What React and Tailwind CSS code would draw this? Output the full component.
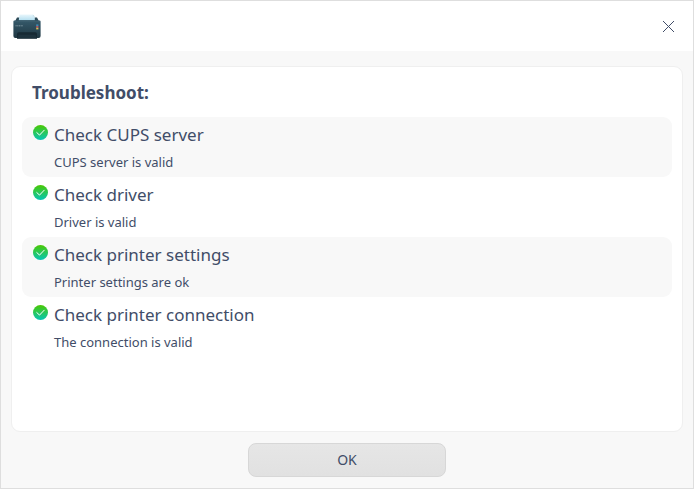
const checks = [
  { title: "Check CUPS server", detail: "CUPS server is valid" },
  { title: "Check driver", detail: "Driver is valid" },
  { title: "Check printer settings", detail: "Printer settings are ok" },
  { title: "Check printer connection", detail: "The connection is valid" },
];

function PrinterIcon() {
  return (
    <svg width="30" height="28" viewBox="0 0 30 28" aria-hidden="true">
      <defs>
        <linearGradient id="body" x1="0" y1="0" x2="0" y2="1">
          <stop offset="0" stopColor="#35596a" />
          <stop offset="0.5" stopColor="#2a4856" />
          <stop offset="1" stopColor="#1f3641" />
        </linearGradient>
        <linearGradient id="paper" x1="0" y1="0" x2="0" y2="1">
          <stop offset="0" stopColor="#eaf7fc" />
          <stop offset="1" stopColor="#b5dff0" />
        </linearGradient>
      </defs>
      <path d="M5 4.5h20l2.4 4.5H2.6z" fill="#2d4a58" />
      <path d="M7.5 1.4h13.3l2 2V7.2h-16z" fill="url(#paper)" />
      <path d="M20.8 1.4v2h2z" fill="#c5dce6" />
      <path d="M2.4 7.6h25.2q1 0 1 1v14.4q0 2-2 2H3.4q-2 0-2-2v-14.4q0-1 1-1z" fill="url(#body)" />
      <path d="M2 8.4h26" stroke="#41616f" strokeWidth="0.6" />
      <path d="M5 21q0-1.8 1.8-1.8h16.4q1.8 0 1.8 1.8v4.8H5z" fill="#172a34" />
      <path d="M6.5 21.8h17l1 3.4h-19z" fill="#1d323d" />
      <path d="M3.5 12.8h7.5" stroke="#8fa5af" strokeWidth="0.8" strokeDasharray="1.2 .5" />
      <path d="M24.2 11.4h2.2v1.6h-2.2z" fill="#3b8cb8" />
      <path d="M24.2 13h2.2v1.7h-2.2z" fill="#b84f60" />
      <path d="M24.2 14.7h2.2v1.7h-2.2z" fill="#d3bd57" />
    </svg>
  );
}

function CheckIcon() {
  return (
    <svg width="16" height="16" viewBox="-0.5 0.5 16 16" className="shrink-0" aria-hidden="true">
      <defs>
        <linearGradient id="valid" x1="0" y1="0" x2="0" y2="1">
          <stop offset="0" stopColor="#4ac800" />
          <stop offset="1" stopColor="#05c6b6" />
        </linearGradient>
      </defs>
      <circle cx="8" cy="8" r="7.5" fill="url(#valid)" />
      <path d="M4 7.8l3 2.8 5-5.2" fill="none" stroke="#fff" strokeWidth="1" />
    </svg>
  );
}

export default function App() {
  return (
    <div className="flex h-[489px] w-[694px] flex-col border border-[#dedede] bg-[#f8f8f8] font-['Noto_Sans',sans-serif] text-[#414d68]">
      <header className="flex h-[50px] items-start justify-between bg-white pt-3 pr-[18px] pl-[11px]">
        <PrinterIcon />
        <button aria-label="Close" className="mt-[7px]">
          <svg width="13" height="13" viewBox="0 0 13 13" className="block" shapeRendering="crispEdges">
            <path d="M1 1l11 11M12 1L1 12" stroke="#414d68" strokeWidth="1" fill="none" />
          </svg>
        </button>
      </header>
      <main className="mx-[10px] mt-[15px] h-[366px] rounded-[9px] border border-[#efefef] bg-white px-[10px]">
        <h1 className="h-[50px] pt-[14px] pl-[10px] text-[17px] leading-6 font-bold">Troubleshoot:</h1>
        <ul>
          {checks.map((check) => (
            <li key={check.title} className="flex h-[60px] gap-[6px] rounded-[9px] pt-2 pl-[10px] odd:bg-[#f8f8f8]">
              <CheckIcon />
              <div>
                <p className="-mt-[2px] text-[17px] leading-6">{check.title}</p>
                <p className="mt-[6px] text-[13px] leading-[18px]">{check.detail}</p>
              </div>
            </li>
          ))}
        </ul>
      </main>
      <button className="mt-[11px] h-[34px] w-[198px] self-center rounded-lg border border-[#d7d7d7] bg-linear-to-b from-[#e6e6e6] to-[#e1e1e1] text-sm">
        OK
      </button>
    </div>
  );
}
